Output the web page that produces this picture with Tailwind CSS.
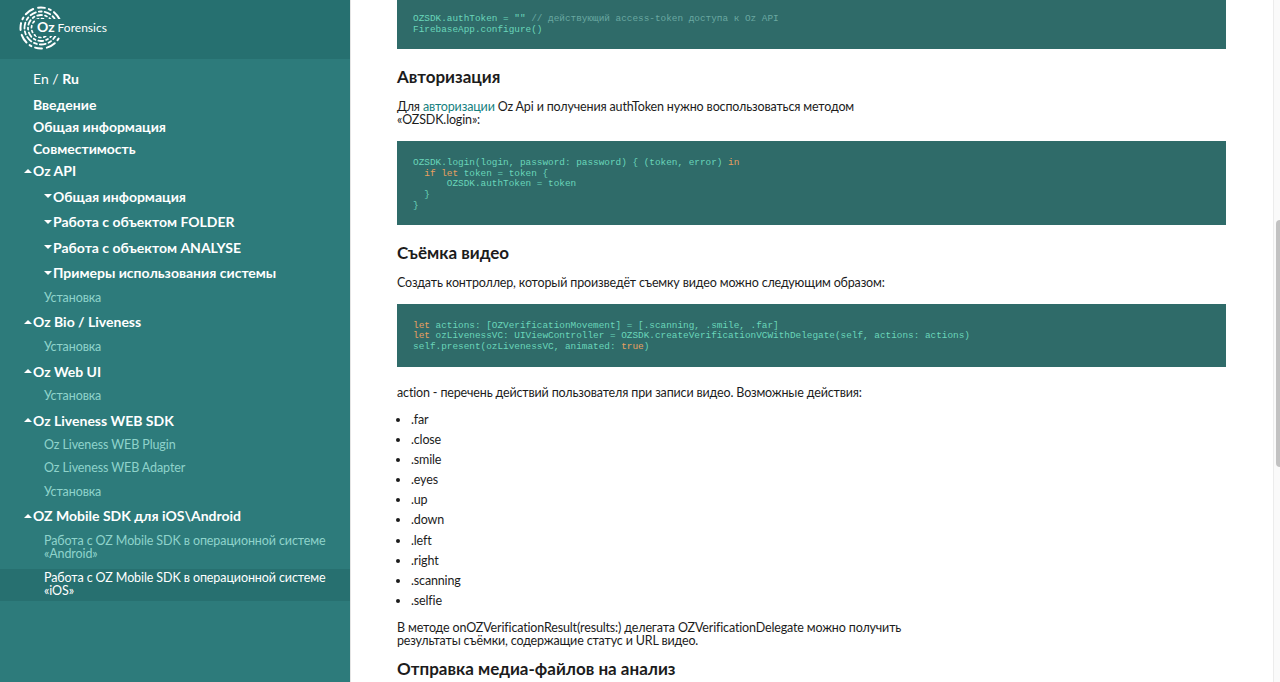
<!DOCTYPE html>
<html lang="ru">
<head>
  <meta charset="UTF-8" />
  <meta name="viewport" content="width=device-width, initial-scale=1.0" />
  <title>Oz Forensics</title>
  <script src="https://cdn.jsdelivr.net/npm/@tailwindcss/browser@4"></script>
</head>
<body class="h-screen overflow-hidden bg-white text-[#1c1c1c] font-['Lato','Roboto',sans-serif]">
  <div class="flex h-[682px] relative">

    <!-- Sidebar -->
    <aside class="w-[351px] h-full shrink-0 bg-[#2d7b7b] text-white border-r border-[#e4e4e4]">
      <header class="h-[59px] bg-[#267070] relative">
        <svg class="absolute left-[18px] top-[5px]" width="46" height="46" viewBox="0 0 46 46" fill="none" stroke="#fff" stroke-linecap="round">
          <circle cx="23" cy="23" r="20.5" stroke-width="2" stroke-dasharray="7 4 2 4 9 5" />
          <circle cx="23" cy="23" r="16.5" stroke-width="1.8" stroke-dasharray="3 3 6 3" />
          <circle cx="23" cy="23" r="13" stroke-width="1.8" stroke-dasharray="2 3 5 3" />
          <circle cx="23" cy="23" r="9.5" stroke-width="1.7" stroke-dasharray="2 3" />
          <rect x="18" y="14" width="28" height="17" fill="#267070" stroke="none" />
        </svg>
        <div class="absolute left-[37px] top-[19px] leading-4 whitespace-nowrap flex items-baseline gap-[3px]"><span class="font-bold text-[14px]">Oz</span><span class="text-[12px]">Forensics</span></div>
      </header>

      <nav class="pt-[12px] text-[12.5px] tracking-[-0.1px] whitespace-nowrap">
        <div class="pl-[33px] h-[16px] mb-[7px] leading-4 text-[14px] tracking-normal"><span>En / </span><span class="font-bold">Ru</span></div>
        <a class="block pl-[33px] h-[22px] leading-[22px] text-[14px] tracking-normal font-bold">Введение</a>
        <a class="block pl-[33px] h-[22px] leading-[22px] text-[14px] tracking-normal font-bold">Общая информация</a>
        <a class="block pl-[33px] h-[22px] leading-[22px] text-[14px] tracking-normal font-bold">Совместимость</a>

        <a class="flex items-center pl-[24px] h-[21px] text-[14px] tracking-normal font-bold"><span class="w-0 h-0 border-x-[4px] border-x-transparent border-b-[4px] border-b-white mr-[1px]"></span>Oz API</a>
        <div class="pt-[2.7px]">
          <a class="flex items-center pl-[44px] h-[25.5px] text-[14px] tracking-normal font-bold"><span class="w-0 h-0 border-x-[4px] border-x-transparent border-t-[4px] border-t-white mr-[1px]"></span>Общая информация</a>
          <a class="flex items-center pl-[44px] h-[25.5px] text-[14px] tracking-normal font-bold"><span class="w-0 h-0 border-x-[4px] border-x-transparent border-t-[4px] border-t-white mr-[1px]"></span>Работа с объектом FOLDER</a>
          <a class="flex items-center pl-[44px] h-[25.5px] text-[14px] tracking-normal font-bold"><span class="w-0 h-0 border-x-[4px] border-x-transparent border-t-[4px] border-t-white mr-[1px]"></span>Работа с объектом ANALYSE</a>
          <a class="flex items-center pl-[44px] h-[25.5px] text-[14px] tracking-normal font-bold"><span class="w-0 h-0 border-x-[4px] border-x-transparent border-t-[4px] border-t-white mr-[1px]"></span>Примеры использования системы</a>
          <a class="block pl-[44px] h-[23.5px] leading-[23.5px] text-[#8fd3cb]">Установка</a>
        </div>

        <a class="flex items-center pl-[24px] h-[25.5px] text-[14px] tracking-normal font-bold"><span class="w-0 h-0 border-x-[4px] border-x-transparent border-b-[4px] border-b-white mr-[1px]"></span>Oz Bio / Liveness</a>
        <a class="block pl-[44px] h-[24px] leading-[24px] text-[#8fd3cb]">Установка</a>

        <a class="flex items-center pl-[24px] h-[25px] text-[14px] tracking-normal font-bold"><span class="w-0 h-0 border-x-[4px] border-x-transparent border-b-[4px] border-b-white mr-[1px]"></span>Oz Web UI</a>
        <a class="block pl-[44px] h-[24px] leading-[24px] text-[#8fd3cb]">Установка</a>

        <a class="flex items-center pl-[24px] h-[25px] text-[14px] tracking-normal font-bold"><span class="w-0 h-0 border-x-[4px] border-x-transparent border-b-[4px] border-b-white mr-[1px]"></span>Oz Liveness WEB SDK</a>
        <a class="block pl-[44px] h-[23.5px] leading-[23.5px] text-[#8fd3cb]">Oz Liveness WEB Plugin</a>
        <a class="block pl-[44px] h-[23.5px] leading-[23.5px] text-[#8fd3cb]">Oz Liveness WEB Adapter</a>
        <a class="block pl-[44px] h-[23.5px] leading-[23.5px] text-[#8fd3cb]">Установка</a>

        <a class="flex items-center pl-[24px] h-[25px] text-[14px] tracking-normal font-bold"><span class="w-0 h-0 border-x-[4px] border-x-transparent border-b-[4px] border-b-white mr-[1px]"></span>OZ Mobile SDK для iOS\Android</a>
        <a class="block pl-[44px] pt-[6px] pb-[5px] leading-[13px] text-[#8fd3cb]">Работа с OZ Mobile SDK в операционной системе<br />«Android»</a>
        <a class="block pl-[44px] pt-[2px] h-[32px] mt-[4px] leading-[13px] bg-[#277070]">Работа с OZ Mobile SDK в операционной системе<br />«iOS»</a>
      </nav>
    </aside>

    <!-- Content -->
    <main class="flex-1 pl-[46px] text-[12.5px] tracking-[-0.15px] leading-[13px] overflow-hidden">
      <div class="w-[829px]">
        <pre class="h-[49px] pl-[16px] pt-[14px] bg-[#2f6b69] text-[#6ad6ba] tracking-normal font-['Liberation_Mono',monospace] text-[9.4px] leading-[10.7px]">OZSDK.authToken = "" <span class="text-[#6aa8a1]">// действующий access-token доступа к Oz API</span>
FirebaseApp.configure()</pre>

        <h2 class="mt-[16px] h-[24px] leading-[24px] text-[17px] tracking-normal font-bold">Авторизация</h2>
        <p class="mt-[10.5px] w-[520px]">Для <a class="text-[#157f80]">авторизации</a> Oz Api и получения authToken нужно воспользоваться методом<br />«OZSDK.login»:</p>

        <pre class="mt-[15.5px] h-[84px] pl-[16px] pt-[17px] bg-[#2f6b69] text-[#6ad6ba] tracking-normal font-['Liberation_Mono',monospace] text-[9.4px] leading-[10.7px]">OZSDK.login(login, password: password) { (token, error) <span class="text-[#e8a060]">in</span>
  <span class="text-[#e8a060]">if</span> <span class="text-[#e8a060]">let</span> token = token {
      OZSDK.authToken = token
  }
}</pre>

        <h2 class="mt-[16px] h-[24px] leading-[24px] text-[17px] tracking-normal font-bold">Съёмка видео</h2>
        <p class="mt-[10.5px]">Создать контроллер, который произведёт съемку видео можно следующим образом:</p>

        <pre class="mt-[15.5px] h-[63px] pl-[16px] pt-[16.5px] bg-[#2f6b69] text-[#6ad6ba] tracking-normal font-['Liberation_Mono',monospace] text-[9.4px] leading-[10.7px]"><span class="text-[#e8a060]">let</span> actions: [OZVerificationMovement] = [.scanning, .smile, .far]
<span class="text-[#e8a060]">let</span> ozLivenessVC: UIViewController = OZSDK.createVerificationVCWithDelegate(self, actions: actions)
self.present(ozLivenessVC, animated: <span class="text-[#e8a060]">true</span>)</pre>

        <p class="mt-[18.5px]">action - перечень действий пользователя при записи видео. Возможные действия:</p>

        <ul class="mt-[11.5px] pl-[14px] list-disc leading-[20.1px]">
          <li>.far</li>
          <li>.close</li>
          <li>.smile</li>
          <li>.eyes</li>
          <li>.up</li>
          <li>.down</li>
          <li>.left</li>
          <li>.right</li>
          <li>.scanning</li>
          <li>.selfie</li>
        </ul>

        <p class="mt-[10px]">В методе onOZVerificationResult(results:) делегата OZVerificationDelegate можно получить<br />результаты съёмки, содержащие статус и URL видео.</p>

        <h2 class="mt-[10px] h-[24px] leading-[24px] text-[17px] tracking-normal font-bold">Отправка медиа-файлов на анализ</h2>
      </div>
    </main>

    <!-- Scrollbar -->
    <div class="absolute right-0 top-0 bottom-0 w-[7px] bg-[#fafafa] border-l border-[#ececec]">
      <div class="absolute right-0 top-[220px] h-[247px] w-[4px] rounded-l-sm bg-[#c2c2c2]"></div>
    </div>
  </div>
</body>
</html>
